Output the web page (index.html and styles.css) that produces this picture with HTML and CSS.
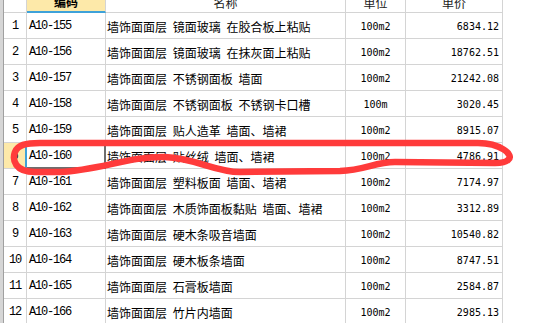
FILE: index.html
```html
<!DOCTYPE html>
<html lang="zh-CN">
<head>
<meta charset="utf-8">
<title>定额表</title>
<link rel="stylesheet" href="styles.css">
</head>
<body>
<div class="sheet">
  <div class="edge"></div>
  <div class="grid">
    <div class="hd rn-h"></div>
    <div class="hd code-h">编码</div>
    <div class="hd">名称</div>
    <div class="hd">单位</div>
    <div class="hd">单价</div>

    <div class="c rn">1</div><div class="c code">A10-155</div><div class="c name">墙饰面面层 镜面玻璃 在胶合板上粘贴</div><div class="c unit">100m2</div><div class="c price">6834.12</div>
    <div class="c rn">2</div><div class="c code">A10-156</div><div class="c name">墙饰面面层 镜面玻璃 在抹灰面上粘贴</div><div class="c unit">100m2</div><div class="c price">18762.51</div>
    <div class="c rn">3</div><div class="c code">A10-157</div><div class="c name">墙饰面面层 不锈钢面板 墙面</div><div class="c unit">100m2</div><div class="c price">21242.08</div>
    <div class="c rn">4</div><div class="c code">A10-158</div><div class="c name">墙饰面面层 不锈钢面板 不锈钢卡口槽</div><div class="c unit">100m</div><div class="c price">3020.45</div>
    <div class="c rn">5</div><div class="c code">A10-159</div><div class="c name">墙饰面面层 贴人造革 墙面、墙裙</div><div class="c unit">100m2</div><div class="c price">8915.07</div>
    <div class="c rn rn-sel">6</div><div class="c code code-sel">A10-160</div><div class="c name">墙饰面面层 贴丝绒 墙面、墙裙</div><div class="c unit">100m2</div><div class="c price">4786.91</div>
    <div class="c rn">7</div><div class="c code">A10-161</div><div class="c name">墙饰面面层 塑料板面 墙面、墙裙</div><div class="c unit">100m2</div><div class="c price">7174.97</div>
    <div class="c rn">8</div><div class="c code">A10-162</div><div class="c name">墙饰面面层 木质饰面板黏贴 墙面、墙裙</div><div class="c unit">100m2</div><div class="c price">3312.89</div>
    <div class="c rn">9</div><div class="c code">A10-163</div><div class="c name">墙饰面面层 硬木条吸音墙面</div><div class="c unit">100m2</div><div class="c price">10540.82</div>
    <div class="c rn">10</div><div class="c code">A10-164</div><div class="c name">墙饰面面层 硬木板条墙面</div><div class="c unit">100m2</div><div class="c price">8747.51</div>
    <div class="c rn">11</div><div class="c code">A10-165</div><div class="c name">墙饰面面层 石膏板墙面</div><div class="c unit">100m2</div><div class="c price">2584.87</div>
    <div class="c rn">12</div><div class="c code">A10-166</div><div class="c name">墙饰面面层 竹片内墙面</div><div class="c unit">100m2</div><div class="c price">2985.13</div>
  </div>
</div>
<svg class="marker" width="533" height="323" viewBox="0 0 533 323">
  <path d="M495 163 L395 162 C375 162 365 170 340 171 L240 172 C215 172 195 158 165 157 C130 156 100 170 60 172 L35 172 C15 172 12 160 15 152 C18 145 25 143 40 143 L478 143 C500 143 515 155 508 160 C505 163 500 163 495 163"/>
</svg>
</body>
</html>
```

FILE: styles.css
```css
html, body {
  margin: 0;
  padding: 0;
  background: #ffffff;
  overflow: hidden;
}
body {
  width: 533px;
  height: 323px;
  position: relative;
  font-family: "Noto Sans CJK SC", "DejaVu Sans", sans-serif;
  font-size: 12px;
  color: #000;
}
.sheet {
  display: flex;
  align-items: flex-start;
}
.edge {
  width: 3px;
  height: 323px;
  background: #d6d6d6;
  border-right: 1px solid #a0a0a0;
  flex: none;
}
.grid {
  display: grid;
  grid-template-columns: 23px 79px 240px 60px 97px;
  grid-auto-rows: 26px;
  grid-template-rows: 24px;
  margin-top: -11px;
}
.hd, .c {
  box-sizing: border-box;
  border-right: 1px solid #d4d4d4;
  border-bottom: 1px solid #d4d4d4;
  white-space: nowrap;
  overflow: hidden;
}
.hd {
  display: flex;
  align-items: center;
  justify-content: center;
  padding-top: 3px;
  font-size: 12px;
  color: #1a1a1a;
}
.code-h {
  background: #fde9a9;
  border-bottom: 2px solid #3ea2d9;
  font-weight: bold;
  color: #000;
}
.c {
  display: flex;
  align-items: center;
  line-height: 25px;
}
.rn {
  justify-content: center;
  padding-top: 2px;
  font-family: "Liberation Mono", monospace;
  font-size: 12px;
  letter-spacing: -1.2px;
}
.rn-sel {
  background: #fde9a9;
  border-right: 2px solid #3ea2d9;
}
.code {
  padding-left: 2px;
  padding-top: 2px;
  font-family: "Liberation Mono", monospace;
  font-size: 12px;
  letter-spacing: -1.2px;
}
.code-sel {
  border-right-color: #6e6e6e;
  border-bottom-color: #6e6e6e;
  box-shadow: inset -1px -1px 0 #6e6e6e;
}
.name {
  padding-left: 1px;
  padding-top: 1px;
  word-spacing: 3px;
}
.unit {
  justify-content: center;
  padding-top: 1px;
  font-family: "DejaVu Sans Mono", monospace;
  font-size: 10px;
}
.price {
  justify-content: flex-end;
  padding-right: 3px;
  padding-top: 1px;
  font-family: "DejaVu Sans Mono", monospace;
  font-size: 10px;
}
.marker {
  position: absolute;
  left: 0;
  top: 0;
  pointer-events: none;
}
.marker path {
  fill: none;
  stroke: #ff3b3b;
  stroke-width: 6.5;
  stroke-linecap: round;
  stroke-linejoin: round;
}
```
